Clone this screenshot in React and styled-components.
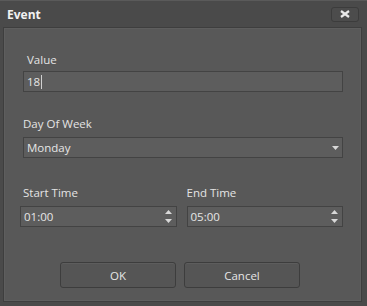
import styled, { createGlobalStyle } from "styled-components";

const Global = createGlobalStyle`
  html, body { margin: 0; padding: 0; background: #474747; }
  body { font-family: "Open Sans", "Noto Sans", sans-serif; }
`;

const Window = styled.div`
  width: 367px;
  height: 306px;
  box-sizing: border-box;
  background: #4a4a4a;
  border-top: 1px solid #5a5a5a;
  display: flex;
  flex-direction: column;
  padding: 0 5px 4px 3px;
`;

const TitleBar = styled.div`
  height: 26px;
  display: flex;
  align-items: center;
  justify-content: space-between;
  padding: 0 3px 0 4px;
`;

const Title = styled.span`
  color: #f2f2f2;
  font-size: 12px;
  font-weight: 700;
`;

const CloseButton = styled.button`
  width: 28px;
  height: 15px;
  padding: 0;
  border: 1px solid #3c3c3c;
  border-radius: 3px;
  background: #4c4c4c;
  display: flex;
  align-items: center;
  justify-content: center;
`;

const Panel = styled.div`
  flex: 1;
  background: #585858;
  border: 1px solid #3e3e3e;
  box-shadow: inset 0 0 0 1px #5e5e5e;
  padding: 24px 18px 0 19px;
  display: flex;
  flex-direction: column;
`;

const Field = styled.div`
  display: flex;
  flex-direction: column;
  margin-bottom: ${(p) => p.$gap || 0}px;
  flex: ${(p) => (p.$grow ? 1 : "none")};
  margin-left: ${(p) => p.$shift || 0}px;
`;

const Label = styled.label`
  color: #e4e4e4;
  font-size: 11.5px;
  margin-left: ${(p) => p.$indent || 0}px;
  margin-bottom: ${(p) => p.$space ?? 6}px;
`;

const Box = styled.div`
  height: 21px;
  box-sizing: border-box;
  background: #5d5d5d;
  border: 1px solid #434343;
  display: flex;
  align-items: center;
  padding: 0 3px;
  color: #e6e6e6;
  font-size: 11.5px;
`;

const Caret = styled.span`
  display: inline-block;
  width: 1px;
  height: 14px;
  background: #d0d0d0;
  margin-left: 1px;
`;

const Value = styled.span`
  flex: 1;
`;

const Row = styled.div`
  display: flex;
  gap: 10px;
`;

const Spin = styled.div`
  display: flex;
  flex-direction: column;
  gap: 5px;
  margin-right: 1px;
`;

const Footer = styled.div`
  display: flex;
  justify-content: center;
  gap: 8px;
  margin-top: 35px;
  padding-right: 6px;
`;

const Button = styled.button`
  width: 116px;
  height: 26px;
  background: #555555;
  border: 1px solid #3d3d3d;
  border-radius: 3px;
  box-shadow: inset 0 1px 0 #5d5d5d;
  color: #e6e6e6;
  font-family: inherit;
  font-size: 11.5px;
`;

const Arrow = ({ up }) => (
  <svg width="7" height="4" viewBox="0 0 7 4">
    <path d={up ? "M0 4 L3.5 0 L7 4 Z" : "M0 0 L3.5 4 L7 0 Z"} fill="#d8d8d8" />
  </svg>
);

const Spinner = () => (
  <Spin>
    <Arrow up />
    <Arrow />
  </Spin>
);

export default function App() {
  return (
    <>
      <Global />
      <Window>
        <TitleBar>
          <Title>Event</Title>
          <CloseButton>
            <svg width="10" height="8" viewBox="0 0 10 8">
              <path d="M1 1 L9 7 M9 1 L1 7" stroke="#e8e8e8" strokeWidth="2.2" />
            </svg>
          </CloseButton>
        </TitleBar>
        <Panel>
          <Field $gap={24}>
            <Label $indent={4} $space={4}>Value</Label>
            <Box>
              18
              <Caret />
            </Box>
          </Field>
          <Field $gap={27}>
            <Label>Day Of Week</Label>
            <Box>
              <Value>Monday</Value>
              <Arrow />
            </Box>
          </Field>
          <Row>
            <Field $grow $shift={-3}>
              <Label $indent={3}>Start Time</Label>
              <Box>
                <Value>01:00</Value>
                <Spinner />
              </Box>
            </Field>
            <Field $grow>
              <Label>End Time</Label>
              <Box>
                <Value>05:00</Value>
                <Spinner />
              </Box>
            </Field>
          </Row>
          <Footer>
            <Button>OK</Button>
            <Button>Cancel</Button>
          </Footer>
        </Panel>
      </Window>
    </>
  );
}
